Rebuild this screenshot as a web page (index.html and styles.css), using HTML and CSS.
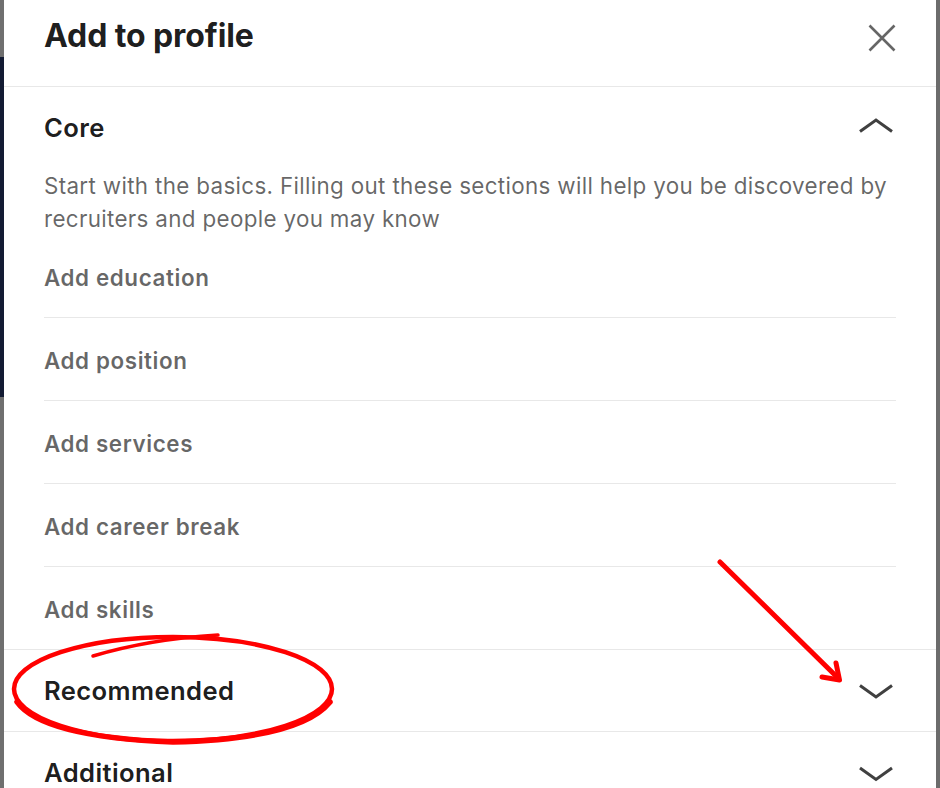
FILE: index.html
```html
<!DOCTYPE html>
<html lang="en">
<head>
<meta charset="utf-8">
<title>Add to profile</title>
<link rel="stylesheet" href="styles.css">
</head>
<body>
<div class="strip-left">
  <div class="sl-gray-top"></div>
  <div class="sl-navy"></div>
  <div class="sl-gray-bottom"></div>
</div>
<main class="modal">
  <header class="header">
    <h1 class="title">Add to profile</h1>
    <button class="close" aria-label="Dismiss">
      <svg width="28" height="28" viewBox="0 0 28 28"><path d="M1.5 1.5 L26.5 26.5 M26.5 1.5 L1.5 26.5" stroke="#666" stroke-width="2.6" fill="none"/></svg>
    </button>
  </header>
  <section class="sec">
    <div class="sec-head">
      <h2 class="sec-title">Core</h2>
      <svg class="chev" width="38" height="32" viewBox="0 0 38 32"><path d="M2 19.5 L18 8 L34 19.5" stroke="#404040" stroke-width="3" fill="none"/></svg>
    </div>
    <p class="desc">Start with the basics. Filling out these sections will help you be discovered by recruiters and people you may know</p>
    <ul class="items">
      <li class="item">Add education</li>
      <li class="item">Add position</li>
      <li class="item">Add services</li>
      <li class="item">Add career break</li>
      <li class="item">Add skills</li>
    </ul>
  </section>
  <section class="sec">
    <div class="sec-head sec-head-b">
      <h2 class="sec-title">Recommended</h2>
      <svg class="chev" width="38" height="32" viewBox="0 0 38 32"><path d="M2 10.5 L18 22 L34 10.5" stroke="#404040" stroke-width="3" fill="none"/></svg>
    </div>
  </section>
  <section class="sec">
    <div class="sec-head">
      <h2 class="sec-title">Additional</h2>
      <svg class="chev" width="38" height="32" viewBox="0 0 38 32"><path d="M2 11 L18 22.5 L34 11" stroke="#404040" stroke-width="3" fill="none"/></svg>
    </div>
  </section>
</main>
<div class="strip-right"></div>
<svg class="annot" width="940" height="788" viewBox="0 0 940 788">
  <ellipse cx="173" cy="689" rx="159" ry="52" stroke="#ff0000" stroke-width="4.5" fill="none"/>
  <path d="M17 702 Q42 737 173 742 Q300 739 330 702" stroke="#ff0000" stroke-width="5.5" fill="none" stroke-linecap="round"/>
  <path d="M93 656 Q150 639 218 635" stroke="#ff0000" stroke-width="3.5" fill="none" stroke-linecap="round"/>
  <path d="M720 562 L838 678" stroke="#ff0000" stroke-width="5" fill="none" stroke-linecap="round"/>
  <path d="M836 663 L839.5 680 L822 677" stroke="#ff0000" stroke-width="5" fill="none" stroke-linecap="round" stroke-linejoin="round"/>
</svg>
</body>
</html>
```
FILE: styles.css
```css
* { box-sizing: border-box; }
html, body { margin: 0; padding: 0; }
body {
  width: 940px;
  height: 788px;
  overflow: hidden;
  display: flex;
  background: #fff;
  font-family: Inter, "Noto Sans", "Liberation Sans", sans-serif;
  position: relative;
}
.strip-left {
  width: 4px;
  flex-shrink: 0;
  display: flex;
  flex-direction: column;
}
.sl-gray-top { height: 57px; background: #6f6f6f; }
.sl-navy { height: 340px; background: #131b33; }
.sl-gray-bottom { flex: 1; background: #6f6f6f; }
.strip-right { width: 4px; flex-shrink: 0; background: #6c6c6c; }
.modal {
  flex: 1;
  background: #fff;
  display: flex;
  flex-direction: column;
  overflow: hidden;
}
.modal > * { flex-shrink: 0; }
.header {
  display: flex;
  justify-content: space-between;
  align-items: flex-start;
  height: 87px;
  padding: 0 40px;
  border-bottom: 1px solid #e8e8e8;
}
.title {
  margin: 0;
  padding-top: 14px;
  font-size: 32px;
  line-height: 44px;
  font-weight: 700;
  letter-spacing: -0.1px;
  color: rgba(0, 0, 0, 0.9);
}
.close {
  margin-top: 24px;
  width: 28px;
  height: 28px;
  padding: 0;
  border: 0;
  background: none;
  display: block;
}
.close svg { display: block; }
.sec {
  border-bottom: 1px solid #e8e8e8;
  padding: 0 40px;
}
.sec-head {
  display: flex;
  justify-content: space-between;
  align-items: center;
  padding: 25px 0;
}
.sec-head-b { padding: 25px 0 24px; }
.sec-title {
  margin: 0;
  font-size: 25.6px;
  line-height: 32px;
  font-weight: 600;
  letter-spacing: 0.4px;
  color: rgba(0, 0, 0, 0.9);
}
.chev { display: block; }
.desc {
  margin: 0;
  font-size: 22.4px;
  line-height: 33px;
  letter-spacing: 0.33px;
  color: rgba(0, 0, 0, 0.6);
}
.items {
  list-style: none;
  margin: 0;
  padding: 0;
}
.item {
  padding: 31px 0 27px;
  font-size: 22.4px;
  line-height: 24px;
  font-weight: 600;
  letter-spacing: 0.6px;
  color: rgba(0, 0, 0, 0.6);
  border-bottom: 1px solid #e8e8e8;
}
.item:last-child { border-bottom: 0; }
.annot {
  position: absolute;
  left: 0;
  top: 0;
  pointer-events: none;
}
```
